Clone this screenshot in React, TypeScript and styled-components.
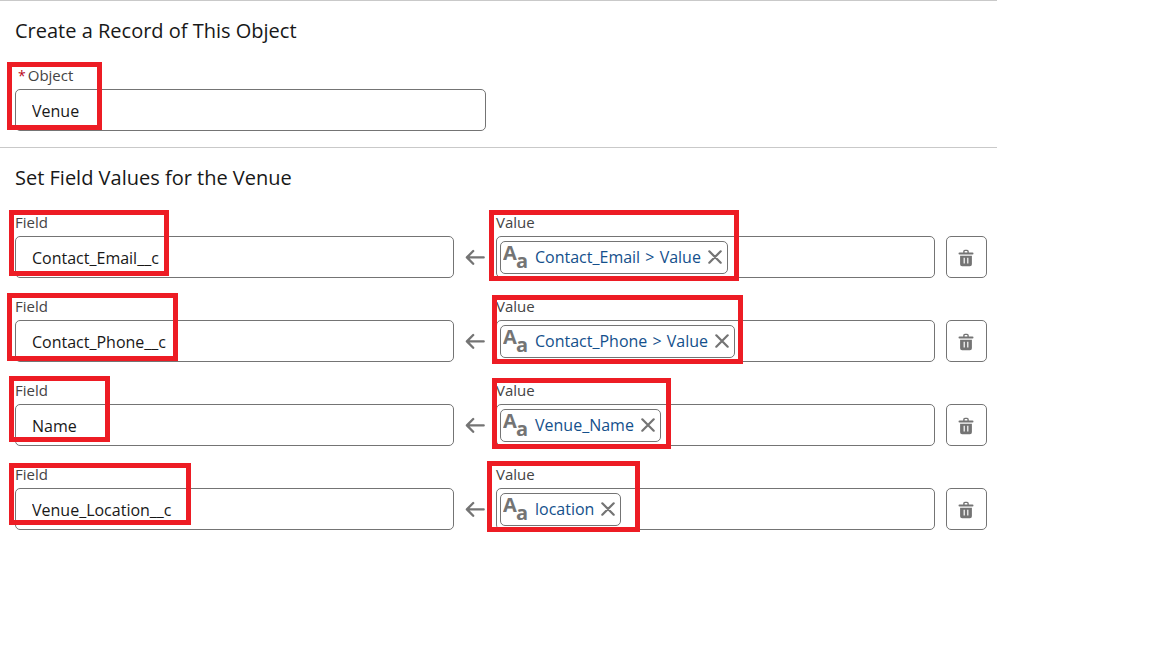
import React, { useId } from "react";
import styled, { createGlobalStyle } from "styled-components";

const GlobalStyle = createGlobalStyle`
  *, *::before, *::after { box-sizing: border-box; }
  body {
    margin: 0;
    background: #fff;
    color: #181818;
    font-family: "Segoe UI", "Open Sans", "Noto Sans", sans-serif;
    font-size: 16px;
  }
`;

const Page = styled.main`
  position: relative;
  min-height: 100vh;
`;

const Panel = styled.form`
  max-width: 997px;
`;

const Section = styled.section`
  padding: 14px 10px 16px 15px;
  border-top: 1px solid #c9c9c9;
`;

const Title = styled.h2`
  margin: 0 0 18px;
  font-size: 20px;
  font-weight: 400;
  line-height: 32px;
`;

const Rows = styled.div`
  display: flex;
  flex-direction: column;
  gap: 18px;
`;

const Row = styled.div`
  display: grid;
  grid-template-columns: calc((100% - 94px) / 2) 42px 1fr 41px;
  align-items: end;
`;

const Field = styled.div<{ $narrow?: boolean }>`
  min-width: 0;
  max-width: ${(p) => (p.$narrow ? "471px" : "none")};
`;

const Label = styled.label<{ $indent?: boolean }>`
  display: block;
  padding: 0 0 4px ${(p) => (p.$indent ? "3px" : "0")};
  color: #444;
  font-size: 15px;
  line-height: 20px;
`;

const Required = styled.abbr`
  margin-right: 2px;
  color: #ba0517;
  font-size: 14px;
  line-height: 1;
  text-decoration: none;
`;

const TextBox = styled.input`
  display: block;
  width: 100%;
  height: 42px;
  padding: 2px 16px 0;
  border: 1px solid #747474;
  border-radius: 5px;
  background: #fff;
  color: #181818;
  font: inherit;
  outline: none;
`;

const Value = styled(Field)`
  margin-right: 11px;
`;

const PillBox = styled.div`
  display: flex;
  align-items: center;
  height: 42px;
  padding: 0 3px;
  border: 1px solid #747474;
  border-radius: 5px;
`;

const BareInput = styled.input`
  flex: 1;
  min-width: 0;
  border: 0;
  background: none;
  font: inherit;
  outline: none;
`;

const Pill = styled.span`
  display: flex;
  align-items: center;
  height: 33px;
  padding: 0 5px 0 2px;
  border: 1px solid #747474;
  border-radius: 5px;
`;

const PillLink = styled.a`
  margin: 0 7px 0 6px;
  color: #14508c;
  text-decoration: none;
  white-space: nowrap;
`;

const Separator = styled.span`
  margin: 0 1px;
`;

const IconButton = styled.button`
  display: flex;
  padding: 0;
  border: 0;
  background: none;
  color: #747474;
`;

const DeleteButton = styled.button`
  display: flex;
  align-items: center;
  justify-content: center;
  height: 42px;
  padding: 2px 1px 0 0;
  border: 1px solid #747474;
  border-radius: 5px;
  background: #fff;
  color: #747474;
`;

const ArrowCell = styled.span`
  display: flex;
  align-items: center;
  justify-content: center;
  height: 42px;
  color: #747474;
`;

const Highlight = styled.div<{ $x: number; $y: number; $w: number; $h: number }>`
  position: absolute;
  left: ${(p) => p.$x}px;
  top: ${(p) => p.$y}px;
  width: ${(p) => p.$w}px;
  height: ${(p) => p.$h}px;
  border: 5px solid #ed1c24;
  pointer-events: none;
`;

const TextTypeIcon = () => (
  <svg width="26" height="43" viewBox="0 0 26 43" fill="#747474" fontWeight="700" aria-hidden="true">
    <text x="0" y="24" fontSize="20">A</text>
    <text x="13" y="32" fontSize="20">a</text>
  </svg>
);

const CloseIcon = () => (
  <svg width="14" height="14" viewBox="0 0 14 14" fill="none" stroke="currentColor" strokeWidth="2.2" strokeLinecap="round">
    <path d="M1.3 1.3L12.7 12.7M12.7 1.3L1.3 12.7" />
  </svg>
);

const ArrowIcon = () => (
  <svg width="20" height="16" viewBox="0 0 20 16" fill="none" stroke="currentColor" strokeWidth="2.3" strokeLinecap="round" strokeLinejoin="round">
    <path d="M18.7 8.4H2.4M8.2 2L1.9 8.4L8.2 14.8" />
  </svg>
);

const TrashIcon = () => (
  <svg width="16" height="18" viewBox="0 0 16 18" fill="none" stroke="currentColor">
    <path d="M1.5 4.4H14.5" strokeWidth="2" strokeLinecap="round" />
    <path d="M5.9 4V2.4Q5.9 1.4 6.9 1.4H9.1Q10.1 1.4 10.1 2.4V4" strokeWidth="1.4" />
    <path
      d="M2.1 6.8H13.9V15.2Q13.9 17.2 11.9 17.2H4.1Q2.1 17.2 2.1 15.2ZM5.6 8.8V14.6H6.8V8.8ZM9.2 8.8V14.6H10.4V8.8Z"
      fill="currentColor"
      fillRule="evenodd"
      stroke="none"
    />
  </svg>
);

const assignments = [
  { field: "Contact_Email__c", value: ["Contact_Email", "Value"] },
  { field: "Contact_Phone__c", value: ["Contact_Phone", "Value"] },
  { field: "Name", value: ["Venue_Name"] },
  { field: "Venue_Location__c", value: ["location"] },
];

const highlights = [
  [7, 62, 95, 68],
  [9, 210, 160, 66],
  [489, 210, 250, 71],
  [7, 293, 171, 68],
  [492, 295, 251, 69],
  [9, 376, 101, 66],
  [492, 378, 179, 71],
  [9, 463, 182, 62],
  [487, 461, 153, 71],
];

function AssignmentRow({ field, value }: { field: string; value: string[] }) {
  const id = useId();
  return (
    <Row>
      <Field>
        <Label htmlFor={`${id}-field`}>Field</Label>
        <TextBox id={`${id}-field`} defaultValue={field} />
      </Field>
      <ArrowCell>
        <ArrowIcon />
      </ArrowCell>
      <Value>
        <Label htmlFor={`${id}-value`}>Value</Label>
        <PillBox>
          <Pill>
            <TextTypeIcon />
            <PillLink href="#">
              {value.map((part, i) => (
                <React.Fragment key={part}>
                  {i > 0 && <> <Separator>&gt;</Separator> </>}
                  {part}
                </React.Fragment>
              ))}
            </PillLink>
            <IconButton type="button" aria-label={`Remove ${value.join(" ")}`}>
              <CloseIcon />
            </IconButton>
          </Pill>
          <BareInput id={`${id}-value`} />
        </PillBox>
      </Value>
      <DeleteButton type="button" aria-label={`Delete ${field}`}>
        <TrashIcon />
      </DeleteButton>
    </Row>
  );
}

export default function App() {
  return (
    <Page>
      <GlobalStyle />
      <Panel>
        <Section>
          <Title>Create a Record of This Object</Title>
          <Field $narrow>
            <Label htmlFor="object" $indent>
              <Required title="required">*</Required>
              Object
            </Label>
            <TextBox id="object" defaultValue="Venue" />
          </Field>
        </Section>
        <Section>
          <Title>Set Field Values for the Venue</Title>
          <Rows>
            {assignments.map((a) => (
              <AssignmentRow key={a.field} {...a} />
            ))}
          </Rows>
        </Section>
      </Panel>
      {highlights.map(([x, y, w, h]) => (
        <Highlight key={`${x}-${y}`} $x={x} $y={y} $w={w} $h={h} />
      ))}
    </Page>
  );
}
